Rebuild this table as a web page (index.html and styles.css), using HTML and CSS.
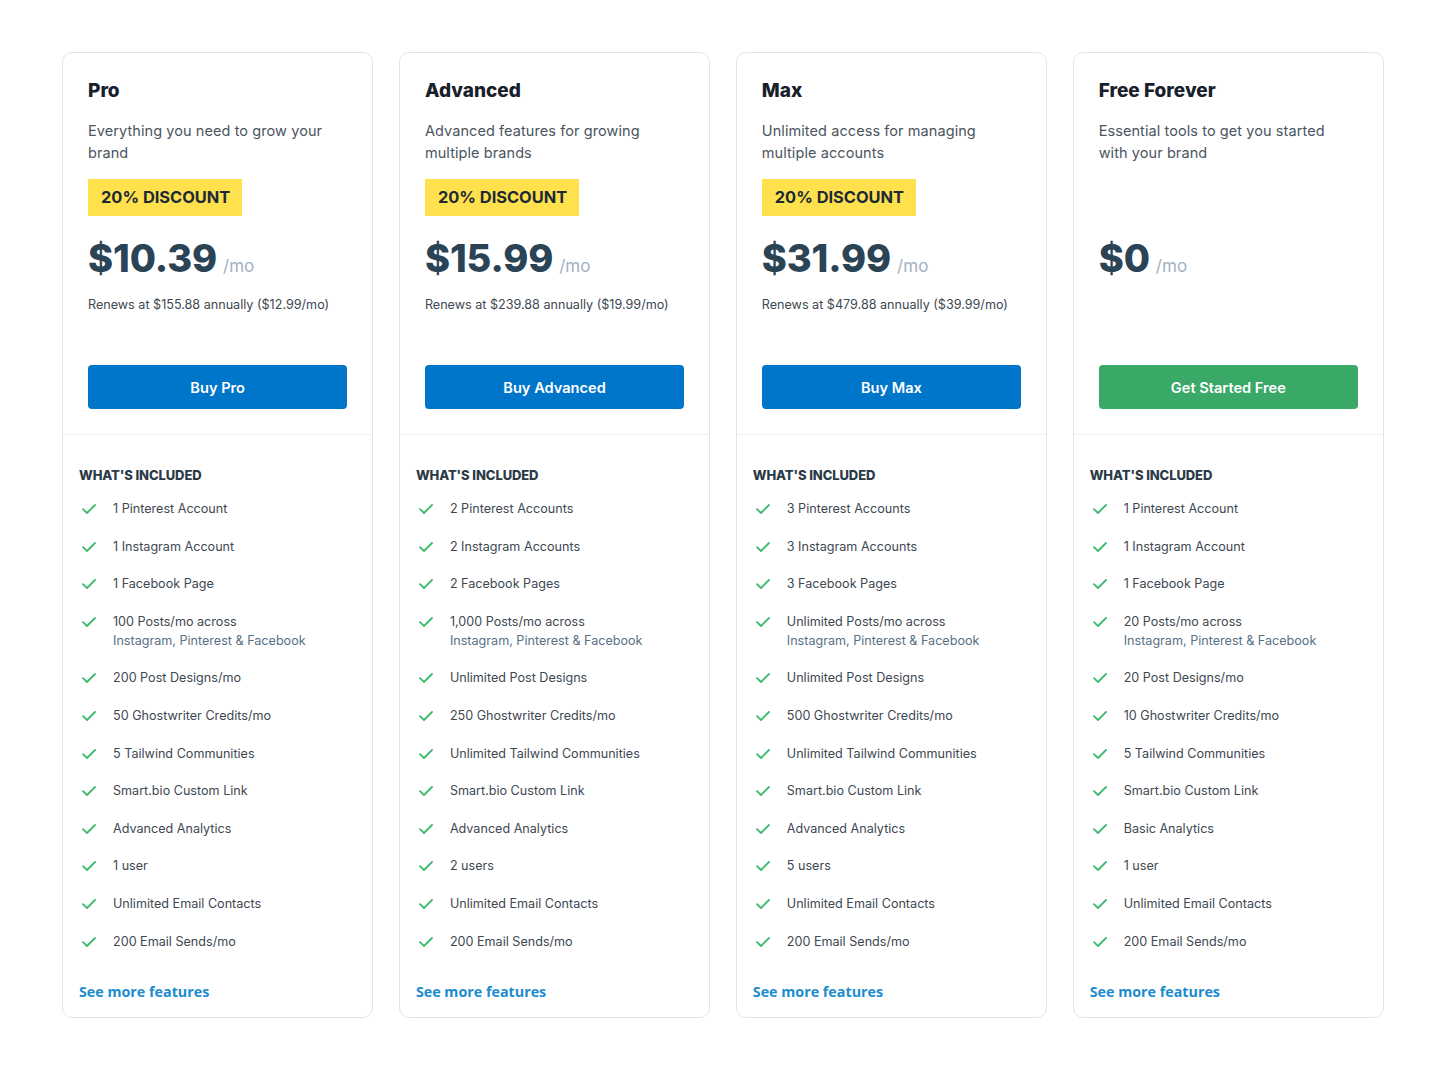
FILE: index.html
```html
<!DOCTYPE html>
<html lang="en">
<head>
<meta charset="utf-8">
<title>Pricing</title>
<link rel="stylesheet" href="styles.css">
</head>
<body>
<svg width="0" height="0" class="defs" aria-hidden="true">
  <symbol id="chk" viewBox="0 0 14 10"><path d="M1 5.2 L5 9 L13 1" fill="none" stroke="currentColor" stroke-width="1.8" stroke-linecap="round" stroke-linejoin="round"/></symbol>
</svg>
<main class="plans">
  <section class="card">
    <div class="top">
      <h2 class="name">Pro</h2>
      <p class="desc">Everything you need to grow your brand</p>
      <div class="badge">20% DISCOUNT</div>
      <div class="price"><span class="amount">$10.39</span><span class="per">/mo</span></div>
      <p class="renew">Renews at $155.88 annually ($12.99/mo)</p>
      <a class="btn btn-blue">Buy Pro</a>
    </div>
    <div class="bottom">
      <h3 class="inc">What's included</h3>
      <ul class="features">
        <li><svg class="ic"><use href="#chk"/></svg><span>1 Pinterest Account</span></li>
        <li><svg class="ic"><use href="#chk"/></svg><span>1 Instagram Account</span></li>
        <li><svg class="ic"><use href="#chk"/></svg><span>1 Facebook Page</span></li>
        <li><svg class="ic"><use href="#chk"/></svg><span>100 Posts/mo across<br><span class="sub">Instagram, Pinterest &amp; Facebook</span></span></li>
        <li><svg class="ic"><use href="#chk"/></svg><span>200 Post Designs/mo</span></li>
        <li><svg class="ic"><use href="#chk"/></svg><span>50 Ghostwriter Credits/mo</span></li>
        <li><svg class="ic"><use href="#chk"/></svg><span>5 Tailwind Communities</span></li>
        <li><svg class="ic"><use href="#chk"/></svg><span>Smart.bio Custom Link</span></li>
        <li><svg class="ic"><use href="#chk"/></svg><span>Advanced Analytics</span></li>
        <li><svg class="ic"><use href="#chk"/></svg><span>1 user</span></li>
        <li><svg class="ic"><use href="#chk"/></svg><span>Unlimited Email Contacts</span></li>
        <li><svg class="ic"><use href="#chk"/></svg><span>200 Email Sends/mo</span></li>
      </ul>
      <a class="more">See more features</a>
    </div>
  </section>

  <section class="card">
    <div class="top">
      <h2 class="name">Advanced</h2>
      <p class="desc">Advanced features for growing multiple brands</p>
      <div class="badge">20% DISCOUNT</div>
      <div class="price"><span class="amount">$15.99</span><span class="per">/mo</span></div>
      <p class="renew">Renews at $239.88 annually ($19.99/mo)</p>
      <a class="btn btn-blue">Buy Advanced</a>
    </div>
    <div class="bottom">
      <h3 class="inc">What's included</h3>
      <ul class="features">
        <li><svg class="ic"><use href="#chk"/></svg><span>2 Pinterest Accounts</span></li>
        <li><svg class="ic"><use href="#chk"/></svg><span>2 Instagram Accounts</span></li>
        <li><svg class="ic"><use href="#chk"/></svg><span>2 Facebook Pages</span></li>
        <li><svg class="ic"><use href="#chk"/></svg><span>1,000 Posts/mo across<br><span class="sub">Instagram, Pinterest &amp; Facebook</span></span></li>
        <li><svg class="ic"><use href="#chk"/></svg><span>Unlimited Post Designs</span></li>
        <li><svg class="ic"><use href="#chk"/></svg><span>250 Ghostwriter Credits/mo</span></li>
        <li><svg class="ic"><use href="#chk"/></svg><span>Unlimited Tailwind Communities</span></li>
        <li><svg class="ic"><use href="#chk"/></svg><span>Smart.bio Custom Link</span></li>
        <li><svg class="ic"><use href="#chk"/></svg><span>Advanced Analytics</span></li>
        <li><svg class="ic"><use href="#chk"/></svg><span>2 users</span></li>
        <li><svg class="ic"><use href="#chk"/></svg><span>Unlimited Email Contacts</span></li>
        <li><svg class="ic"><use href="#chk"/></svg><span>200 Email Sends/mo</span></li>
      </ul>
      <a class="more">See more features</a>
    </div>
  </section>

  <section class="card">
    <div class="top">
      <h2 class="name">Max</h2>
      <p class="desc">Unlimited access for managing multiple accounts</p>
      <div class="badge">20% DISCOUNT</div>
      <div class="price"><span class="amount">$31.99</span><span class="per">/mo</span></div>
      <p class="renew">Renews at $479.88 annually ($39.99/mo)</p>
      <a class="btn btn-blue">Buy Max</a>
    </div>
    <div class="bottom">
      <h3 class="inc">What's included</h3>
      <ul class="features">
        <li><svg class="ic"><use href="#chk"/></svg><span>3 Pinterest Accounts</span></li>
        <li><svg class="ic"><use href="#chk"/></svg><span>3 Instagram Accounts</span></li>
        <li><svg class="ic"><use href="#chk"/></svg><span>3 Facebook Pages</span></li>
        <li><svg class="ic"><use href="#chk"/></svg><span>Unlimited Posts/mo across<br><span class="sub">Instagram, Pinterest &amp; Facebook</span></span></li>
        <li><svg class="ic"><use href="#chk"/></svg><span>Unlimited Post Designs</span></li>
        <li><svg class="ic"><use href="#chk"/></svg><span>500 Ghostwriter Credits/mo</span></li>
        <li><svg class="ic"><use href="#chk"/></svg><span>Unlimited Tailwind Communities</span></li>
        <li><svg class="ic"><use href="#chk"/></svg><span>Smart.bio Custom Link</span></li>
        <li><svg class="ic"><use href="#chk"/></svg><span>Advanced Analytics</span></li>
        <li><svg class="ic"><use href="#chk"/></svg><span>5 users</span></li>
        <li><svg class="ic"><use href="#chk"/></svg><span>Unlimited Email Contacts</span></li>
        <li><svg class="ic"><use href="#chk"/></svg><span>200 Email Sends/mo</span></li>
      </ul>
      <a class="more">See more features</a>
    </div>
  </section>

  <section class="card">
    <div class="top">
      <h2 class="name">Free Forever</h2>
      <p class="desc">Essential tools to get you started with your brand</p>
      <div class="badge hidden">&nbsp;</div>
      <div class="price"><span class="amount">$0</span><span class="per">/mo</span></div>
      <p class="renew hidden">&nbsp;</p>
      <a class="btn btn-green">Get Started Free</a>
    </div>
    <div class="bottom">
      <h3 class="inc">What's included</h3>
      <ul class="features">
        <li><svg class="ic"><use href="#chk"/></svg><span>1 Pinterest Account</span></li>
        <li><svg class="ic"><use href="#chk"/></svg><span>1 Instagram Account</span></li>
        <li><svg class="ic"><use href="#chk"/></svg><span>1 Facebook Page</span></li>
        <li><svg class="ic"><use href="#chk"/></svg><span>20 Posts/mo across<br><span class="sub">Instagram, Pinterest &amp; Facebook</span></span></li>
        <li><svg class="ic"><use href="#chk"/></svg><span>20 Post Designs/mo</span></li>
        <li><svg class="ic"><use href="#chk"/></svg><span>10 Ghostwriter Credits/mo</span></li>
        <li><svg class="ic"><use href="#chk"/></svg><span>5 Tailwind Communities</span></li>
        <li><svg class="ic"><use href="#chk"/></svg><span>Smart.bio Custom Link</span></li>
        <li><svg class="ic"><use href="#chk"/></svg><span>Basic Analytics</span></li>
        <li><svg class="ic"><use href="#chk"/></svg><span>1 user</span></li>
        <li><svg class="ic"><use href="#chk"/></svg><span>Unlimited Email Contacts</span></li>
        <li><svg class="ic"><use href="#chk"/></svg><span>200 Email Sends/mo</span></li>
      </ul>
      <a class="more">See more features</a>
    </div>
  </section>
</main>
</body>
</html>
```

FILE: styles.css
```css
* { box-sizing: border-box; }
html, body { margin: 0; padding: 0; background: #ffffff; }
body {
  font-family: Inter, "Noto Sans", sans-serif;
  color: #3d4852;
  -webkit-font-smoothing: antialiased;
}
.defs { position: absolute; width: 0; height: 0; overflow: hidden; }

.plans {
  display: grid;
  grid-template-columns: repeat(4, 311.3px);
  column-gap: 25.6px;
  padding: 52px 0 0 62px;
}

.card {
  border: 1px solid #dfe5ec;
  border-radius: 10px;
  background: #fff;
  display: flex;
  flex-direction: column;
}

.top {
  padding: 24px 25px 25px 25px;
  border-bottom: 1px solid #edf1f5;
}
.name {
  margin: 0;
  font-size: 19px;
  line-height: 28px;
  font-weight: 800;
  color: #18202b;
}
.desc {
  margin: 15px 0 0;
  max-width: 245px;
  font-size: 14.5px;
  line-height: 22px;
  letter-spacing: 0.08px;
  color: #4b5560;
  height: 44px;
}
.badge {
  display: inline-block;
  margin-top: 15px;
  height: 37px;
  line-height: 37px;
  padding: 0 12px 0 13px;
  background: #ffe14d;
  color: #1c2a35;
  font-size: 16.4px;
  font-weight: 700;
}
.hidden { visibility: hidden; }
.price {
  margin-top: 18px;
  height: 48px;
  display: flex;
  align-items: baseline;
}
.amount {
  font-size: 38px;
  line-height: 48px;
  font-weight: 800;
  color: #2a4455;
  letter-spacing: -0.1px;
}
.per {
  margin-left: 6px;
  font-size: 17px;
  color: #a3b2c2;
}
.renew {
  margin: 14px 0 0;
  font-size: 12.6px;
  line-height: 18px;
  color: #3d4852;
  height: 18px;
}
.btn {
  display: flex;
  align-items: center;
  justify-content: center;
  margin-top: 51px;
  height: 44px;
  border-radius: 4px;
  color: #fff;
  font-size: 14.6px;
  font-weight: 600;
  padding-top: 1px;
}
.btn-blue { background: #0076cb; }
.btn-green { background: #3aa867; }

.bottom {
  padding: 31px 17px 14px 16px;
}
.inc {
  margin: 0;
  font-size: 13px;
  line-height: 18px;
  font-weight: 800;
  text-transform: uppercase;
  color: #2b3a47;
  letter-spacing: -0.1px;
}
.features {
  list-style: none;
  margin: 15px 0 0;
  padding: 0;
  display: flex;
  flex-direction: column;
  gap: 18.6px;
}
.features li {
  display: flex;
  align-items: flex-start;
  font-size: 12.6px;
  line-height: 19px;
  color: #3d4852;
}
.ic {
  flex: none;
  width: 14px;
  height: 10px;
  margin: 5px 17px 0 3px;
  color: #3dba6f;
}
.sub { color: #587084; }
.more {
  display: block;
  margin-top: 30px;
  font-family: "Open Sans", Inter, sans-serif;
  font-size: 14.3px;
  line-height: 22px;
  font-weight: 700;
  color: #1a8ccf;
}
```
